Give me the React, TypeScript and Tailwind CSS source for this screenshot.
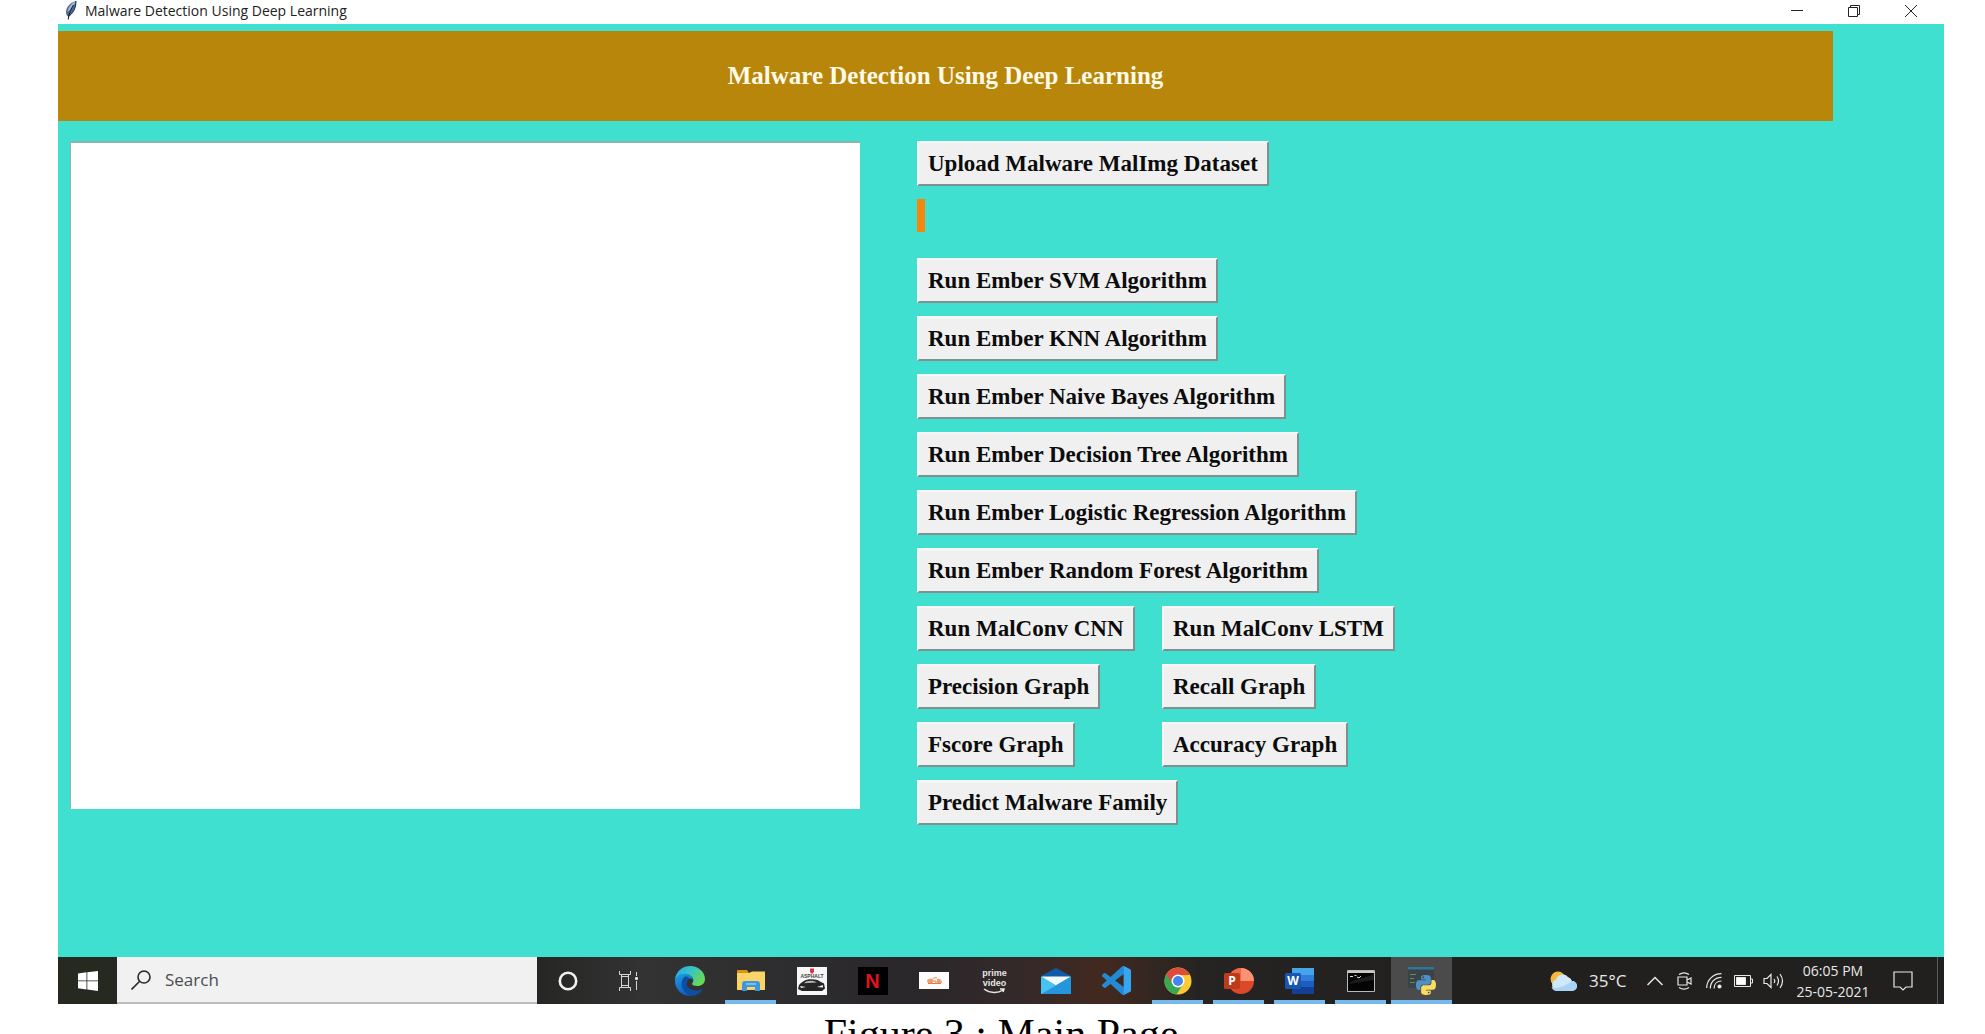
import type { ReactNode } from 'react';

const algorithms = [
  'Run Ember SVM Algorithm',
  'Run Ember KNN Algorithm',
  'Run Ember Naive Bayes Algorithm',
  'Run Ember Decision Tree Algorithm',
  'Run Ember Logistic Regression Algorithm',
  'Run Ember Random Forest Algorithm',
];

const pairs = [
  ['Run MalConv CNN', 'Run MalConv LSTM'],
  ['Precision Graph', 'Recall Graph'],
  ['Fscore Graph', 'Accuracy Graph'],
];

function TkButton({ children }: { children: ReactNode }) {
  return (
    <button className="h-[45px] border-2 border-t-[#f8f8f8] border-r-[#7f9090] border-b-[#7f9090] border-l-[#f8f8f8] bg-[#f0f0f0] px-[9px] text-[23px] leading-none font-bold whitespace-nowrap text-[#0c0c0c]">
      {children}
    </button>
  );
}

function FeatherIcon() {
  return (
    <svg viewBox="0 0 12 19" className="h-[19px] w-3">
      <path d="M11 0C6 1 1 6 1 11c0 2 .8 3.500 2 4.500C8 13 11 7 11 0z" fill="#4d6a94" />
      <path d="M11 0C7 1.500 3 6 2.500 11 6 9 9 5 11 0z" fill="#9db4d3" />
      <path d="M11 0C11 7 8 13 3 15.500" fill="none" stroke="#1b2740" />
      <path d="M8.500 4C6 8 4 12 3.200 18.500" fill="none" stroke="#16181d" />
    </svg>
  );
}

function TitleBar() {
  return (
    <header className="flex h-6 items-center bg-white pb-[3px] pl-[7px] text-[#222]">
      <FeatherIcon />
      <h1 className="ml-2 font-['Open_Sans',sans-serif] text-sm leading-5">
        Malware Detection Using Deep Learning
      </h1>
      <div className="ml-auto flex pr-1">
        <button aria-label="Minimize" className="flex h-5 w-[57px] items-center justify-center">
          <svg viewBox="0 0 12 12" className="h-3 w-3" stroke="#222">
            <path d="M0 5.500h12" />
          </svg>
        </button>
        <button aria-label="Restore" className="flex h-5 w-[57px] items-center justify-center">
          <svg viewBox="0 0 12 12" className="h-3 w-3" fill="none" stroke="#222">
            <path d="M.5 2.500h9v9h-9zM2.500 2V.5h9v9H10" />
          </svg>
        </button>
        <button aria-label="Close" className="flex h-5 w-[58px] items-center justify-center">
          <svg viewBox="0 0 12 12" className="h-3 w-3" stroke="#222">
            <path d="M0 0l12 12M12 0L0 12" />
          </svg>
        </button>
      </div>
    </header>
  );
}

function EdgeIcon() {
  return (
    <svg viewBox="0 0 30 30" className="h-[30px] w-[30px]">
      <defs>
        <linearGradient id="edge-top" x1="0" y1="0" x2="1" y2="0.500">
          <stop offset="0" stopColor="#2aa5e6" />
          <stop offset="0.500" stopColor="#34c3c8" />
          <stop offset="1" stopColor="#66d957" />
        </linearGradient>
        <linearGradient id="edge-low" x1="0" y1="0" x2="0.500" y2="1">
          <stop offset="0" stopColor="#1f9bea" />
          <stop offset="1" stopColor="#0f5bb5" />
        </linearGradient>
      </defs>
      <path d="M0 14C.5 6 7 0 15 0c8.500 0 15 6 15 13 0 4.500-3.500 7-7.500 7-3 0-5.500-1-5.500-2.300 0-.7 1.300-1.300 1.300-3.500 0-3-3-5.200-7-5.200C6 9 1.500 11 0 14z" fill="url(#edge-top)" />
      <path d="M0 14c1.500-4.500 6-6.500 10.500-6.300 4.300.2 7.300 3 7.800 5.800-3-2.500-7-.5-7 4 0 5.500 6 9.500 12 7.500C20.500 28.500 17 30 14 29.800 6 29.500 0 23 0 15z" fill="url(#edge-low)" />
      <path d="M10 10.500c-4 3-4.500 9-1.500 13.500 2 3 4.800 5 7.500 5.700 5 .3 9.500-2.500 12-6.700-8 3.700-16.500 0-16.500-6 0-2.500 1.500-4 3-4.700-1.200-1.500-3-2-4.500-1.800z" fill="#0c4ea3" />
    </svg>
  );
}

function FolderIcon() {
  return (
    <svg viewBox="0 0 28 23" className="h-[23px] w-7">
      <path d="M0 1h10l2 3H0z" fill="#d99413" />
      <path d="M0 4h12l3-1.500h13V21H0z" fill="#fbd468" />
      <path d="M5 22v-7a3 3 0 0 1 3-3h12a3 3 0 0 1 3 3v7h-5v-4h-8v4z" fill="#3d97dd" />
      <path d="M9 14h10v2H9z" fill="#77bdf0" />
    </svg>
  );
}

function RacingIcon() {
  return (
    <svg viewBox="0 0 30 28" className="h-7 w-[30px]">
      <path d="M0 0h30v28H0z" fill="#f6f6f6" />
      <path d="M13 1.500h4V5l-2 2-2-2z" fill="#d0394a" />
      <text x="15" y="11" fontSize="5" fontWeight="700" textAnchor="middle" fill="#444" fontFamily="Liberation Sans, sans-serif">
        ASPHALT
      </text>
      <path d="M2 18c2-2 5-5 9-5.500 5-.5 10 0 12 2l4 2 1 5-3 2.500H5l-4-2z" fill="#252525" />
      <path d="M9 14.500c4-1.200 8-1 11 1l-13 .7z" fill="#b5b5b5" />
      <path d="M3 19l6 1-5 1zM26 18l-6 2 6 .5z" fill="#eee" />
    </svg>
  );
}

function SonyIcon() {
  return (
    <svg viewBox="0 0 30 17" className="h-[17px] w-[30px]">
      <path d="M0 0h30v17H0z" fill="#fcfcfc" />
      <path d="M8 9c0-2 3-3 5-2v4c-2 1-5 0-5-2zM18 7c3-1 5 1 5 4h-5z" fill="#f0a174" />
      <path d="M13 11c-1-4 2-6 5-5M13 9h4v2.500h-4M9 11.500h13" fill="none" stroke="#ea7a45" />
    </svg>
  );
}

function PrimeIcon() {
  return (
    <span className="flex flex-col items-center font-['Liberation_Sans',sans-serif] text-[9px] leading-[10px] font-bold text-[#e6e6e6]">
      <span>prime</span>
      <span>video</span>
      <svg viewBox="0 0 24 6" className="h-[6px] w-6" fill="none" stroke="#e6e6e6" strokeWidth="1.500">
        <path d="M2 1c6 4.500 14 4.500 19 1M18 1h4l-1 3" />
      </svg>
    </span>
  );
}

function MailIcon() {
  return (
    <svg viewBox="0 0 30 26" className="h-[26px] w-[30px]">
      <path d="M0 8l15-8 15 8v5H0z" fill="#0f5ba8" />
      <path d="M1 8.500h28v10H1z" fill="#f4fafe" />
      <path d="M0 8.500l15 9 15-9V26H0z" fill="#36b3ea" />
      <path d="M30 8.500V26H0z" fill="#2497dc" />
      <path d="M0 8.500l15 9L0 26z" fill="#48c2f0" />
    </svg>
  );
}

function CodeIcon() {
  return (
    <svg viewBox="0 0 24 24" className="h-[29px] w-[29px]" fill="#2489d3">
      <path d="M23.150 2.587L18.210.21a1.494 1.494 0 0 0-1.705.29l-9.460 8.630-4.120-3.128a.999.999 0 0 0-1.276.057L.327 7.261A1 1 0 0 0 .326 8.740L3.899 12 .326 15.260a1 1 0 0 0 .001 1.479L1.650 17.940a.999.999 0 0 0 1.276.057l4.120-3.128 9.460 8.630a1.492 1.492 0 0 0 1.704.29l4.942-2.377A1.500 1.500 0 0 0 24 20.060V3.939a1.500 1.500 0 0 0-.85-1.352zm-5.146 14.861L10.826 12l7.178-5.448v10.896z" />
      <path d="M18 .1l5.150 2.487A1.500 1.500 0 0 1 24 3.939V20.060a1.500 1.500 0 0 1-.85 1.352L18 23.900z" fill="#36a6f0" />
    </svg>
  );
}

function ChromeIcon() {
  return (
    <svg viewBox="0 0 28 28" className="h-7 w-7">
      <circle cx="14" cy="14" r="13.500" fill="#fbc932" />
      <path d="M14 14L2.300 7.200A13.500 13.500 0 0 0 12.500 27.400L19 17z" fill="#38a852" />
      <path d="M14 8h11.900A13.500 13.500 0 0 0 2.300 7.200L8.700 17z" fill="#de4b3c" />
      <circle cx="14" cy="14" r="6.500" fill="#fff" />
      <circle cx="14" cy="14" r="5" fill="#4286ee" />
    </svg>
  );
}

function PowerPointIcon() {
  return (
    <svg viewBox="0 0 30 26" className="h-[26px] w-[30px]">
      <circle cx="17" cy="13" r="13" fill="#d9492a" />
      <path d="M17 0a13 13 0 0 1 13 13H17z" fill="#fb9274" />
      <path d="M17 0a13 13 0 0 0-13 13h13z" fill="#ea6a4a" />
      <rect y="5" width="16" height="16" rx="1.500" fill="#bd3a1b" />
      <text x="8" y="17" fontSize="12" fontWeight="700" textAnchor="middle" fill="#fff" fontFamily="Open Sans, sans-serif">
        P
      </text>
    </svg>
  );
}

function WordIcon() {
  return (
    <svg viewBox="0 0 30 26" className="h-[26px] w-[30px]">
      <path d="M7 0h22v7H7z" fill="#46a5ea" />
      <path d="M7 7h22v6H7z" fill="#2f7ddb" />
      <path d="M7 13h22v6H7z" fill="#1d5dc0" />
      <path d="M7 19h22v7H7z" fill="#153f95" />
      <rect y="5" width="16" height="16" rx="1.500" fill="#1956b3" />
      <text x="8" y="17" fontSize="12" fontWeight="700" textAnchor="middle" fill="#fff" fontFamily="Open Sans, sans-serif">
        W
      </text>
    </svg>
  );
}

function TerminalIcon() {
  return (
    <svg viewBox="0 0 28 22" className="h-[22px] w-7">
      <path d="M.5.5h27v21H.5z" fill="#050505" stroke="#b9b9b9" />
      <path d="M1 1h26v2H1z" fill="#c9c9c9" />
      <path d="M3 6.500h3M7.500 5.500h2M10 7l2 1 2-2" fill="none" stroke="#ddd" />
      <path d="M1 14C8 8 18 9 27 4v6z" fill="#1d1d1d" />
    </svg>
  );
}

const snake =
  'M14.250.18l.9.2.73.26.59.3.45.32.34.34.25.34.16.33.1.3.04.26.02.2-.01.13V8.500l-.05.63-.13.55-.21.46-.26.38-.3.31-.33.25-.35.19-.35.14-.33.1-.3.07-.26.04-.21.02H8.770l-.69.05-.59.14-.5.22-.41.27-.33.32-.27.35-.2.36-.15.37-.1.35-.07.32-.04.27-.02.21v3.060H3.170l-.21-.03-.28-.07-.32-.12-.35-.18-.36-.26-.36-.36-.35-.46-.32-.59-.28-.73-.21-.88-.14-1.050-.05-1.230.06-1.220.16-1.040.24-.87.32-.71.36-.57.4-.44.42-.33.42-.24.4-.16.36-.1.32-.05.24-.01h.16l.06.01h8.160v-.83H6.180l-.01-2.750-.02-.37.05-.34.11-.31.17-.28.25-.26.31-.23.38-.2.44-.18.51-.15.58-.12.64-.1.71-.06.77-.04.84-.02 1.270.05zm-6.300 1.980l-.23.33-.08.41.08.41.23.34.33.22.41.09.41-.09.33-.22.23-.34.08-.41-.08-.41-.23-.33-.33-.22-.41-.09-.41.09z';

function PythonIcon() {
  return (
    <svg viewBox="0 0 28 28" className="h-7 w-7">
      <path d="M0 0h26v21H0z" fill="#3c4248" />
      <path d="M0 0h26v2.500H0z" fill="#2f7894" />
      <path d="M2 7.500h6M2 11.500h4M2 15.500h5" stroke="#4c9a5c" />
      <g transform="translate(8 8) scale(0.830)">
        <path d={snake} fill="#4d90c6" />
        <path d={snake} fill="#fbdc62" transform="rotate(180 12 12)" />
      </g>
    </svg>
  );
}

const apps: { name: string; icon: ReactNode; open?: boolean; active?: boolean }[] = [
  {
    name: 'Cortana',
    icon: (
      <svg viewBox="0 0 20 20" className="h-5 w-5">
        <circle cx="10" cy="10" r="8.200" fill="none" stroke="#f2f2f2" strokeWidth="2.600" />
      </svg>
    ),
  },
  {
    name: 'Task View',
    icon: (
      <svg viewBox="0 0 22 20" className="h-5 w-[22px]" fill="none" stroke="#d6d6d6">
        <path d="M1.500 0v3.500h11V0M1.500 20v-3.500h11V20M3.500 5.500h7v9h-7zM3.500 3v14M10.500 3v14M18.500 1v4M18.500 10v9" />
        <path d="M17.500 6.500h2v2h-2z" fill="#fff" />
      </svg>
    ),
  },
  { name: 'Edge', icon: <EdgeIcon /> },
  { name: 'File Explorer', icon: <FolderIcon />, open: true },
  { name: 'Asphalt', icon: <RacingIcon /> },
  {
    name: 'Netflix',
    icon: (
      <span className="flex h-7 w-[30px] items-center justify-center bg-black font-['Liberation_Sans_Narrow','Liberation_Sans',sans-serif] text-xl leading-none font-bold text-[#e01220]">
        N
      </span>
    ),
  },
  { name: 'Sony LIV', icon: <SonyIcon /> },
  { name: 'Prime Video', icon: <PrimeIcon /> },
  { name: 'Mail', icon: <MailIcon /> },
  { name: 'Visual Studio Code', icon: <CodeIcon /> },
  { name: 'Chrome', icon: <ChromeIcon />, open: true },
  { name: 'PowerPoint', icon: <PowerPointIcon />, open: true },
  { name: 'Word', icon: <WordIcon />, open: true },
  { name: 'Command Prompt', icon: <TerminalIcon />, open: true },
  { name: 'Python', icon: <PythonIcon />, open: true, active: true },
];

function Tray() {
  return (
    <div className="ml-auto flex items-center text-[#e8e8e8]">
      <svg viewBox="0 0 27 20" className="h-5 w-[27px]">
        <circle cx="8" cy="8" r="7.500" fill="#f6b83c" />
        <path d="M7 20a6 6 0 0 1-1-11.500A7 7 0 0 1 18 6a6 6 0 0 1 4 4 5 5 0 0 1 0 10z" fill="#cfe8fa" />
        <path d="M7 20a6 6 0 0 1-5.500-4c6 3 15-2 20.500-6a5 5 0 0 1 0 10z" fill="#a8d3f4" />
      </svg>
      <span className="ml-3 w-[46px] text-[17px]">35°C</span>
      <button aria-label="Show hidden icons" className="ml-3">
        <svg viewBox="0 0 16 10" className="h-[10px] w-4" fill="none" stroke="#e8e8e8" strokeWidth="1.500">
          <path d="M.5 9L8 1.500 15.500 9" />
        </svg>
      </button>
      <svg viewBox="0 0 16 18" className="ml-[14px] h-[18px] w-4" fill="none" stroke="#e8e8e8" strokeWidth="1.200">
        <path d="M1 5h9v8H1zM10 8l4-2v6l-4-2M2 2.500c3-2 7-2 10 0M2 15.500c3 2 7 2 10 0" />
      </svg>
      <svg viewBox="0 0 16 16" className="ml-[13px] h-4 w-4" fill="none" stroke="#e8e8e8" strokeWidth="1.200">
        <path d="M.7 15C.7 7 7 .7 15.500.7M4.300 15.500C4.300 9 9 4.300 15.500 4.300M8 15.500C8 11 11 8 15.500 8" />
        <circle cx="13.500" cy="13.500" r="1.500" fill="#fff" />
      </svg>
      <svg viewBox="0 0 19 12" className="ml-3 h-3 w-[19px]" fill="none" stroke="#e8e8e8">
        <path d="M.5.5h16v11H.5zM17 4h1.500v4H17" />
        <path d="M2.500 2.500h9v7h-9z" fill="#fff" />
      </svg>
      <svg viewBox="0 0 21 16" className="ml-[10px] h-4 w-[21px]" fill="none" stroke="#e8e8e8" strokeWidth="1.200">
        <path d="M1 5.500h3l4-4v13l-4-4H1zM11 6q1.500 2 0 4M14 3.500q3 4.500 0 9M17 1q5 7 0 14" />
      </svg>
      <div className="ml-2 flex w-[82px] flex-col items-center text-sm leading-[21px]">
        <span>06:05 PM</span>
        <span>25-05-2021</span>
      </div>
      <button aria-label="Notifications" className="mr-6 ml-[19px]">
        <svg viewBox="0 0 20 20" className="h-5 w-5" fill="none" stroke="#e8e8e8" strokeWidth="1.200">
          <path d="M1 1h18v15h-6l-3 3-3-3H1z" />
        </svg>
      </button>
      <span className="mr-[6px] h-[47px] w-px bg-[#5c5c5c]"></span>
    </div>
  );
}

function Taskbar() {
  return (
    <footer className="flex h-[47px] shrink-0 bg-[#21201f] font-['Open_Sans',sans-serif]">
      <button aria-label="Start" className="flex w-[59px] items-center justify-center bg-[#25291f]">
        <svg viewBox="0 0 20 20" className="h-5 w-5" fill="#fff">
          <path d="M0 2.500L8.500 1.300V9.500H0zM9.300 1.200L20 0v9.500H9.300zM0 10.300h8.500v8.200L0 17.300zM9.300 10.300H20V20L9.300 18.600z" />
        </svg>
      </button>
      <label className="flex w-[421px] items-center border-b-2 border-[#bdbdbd] bg-[#f1f1f1] pl-[14px]">
        <svg viewBox="0 0 20 20" className="h-5 w-5" fill="none" stroke="#2a2a2a" strokeWidth="1.600">
          <circle cx="13" cy="7" r="6" />
          <path d="M8.700 11.300L.5 19.500" />
        </svg>
        <input
          type="text"
          aria-label="Search"
          placeholder="Search"
          className="ml-[14px] w-[340px] bg-transparent text-[17px] outline-none placeholder:text-[#4a4d50]"
        />
      </label>
      <nav className="-ml-px flex bg-[linear-gradient(90deg,#262625,#333333_12%,#29272a_40%,#33292a_52%,#42291f_62%,#262423_72%,#21201f)]">
        {apps.map(({ name, icon, open, active }) => (
          <button
            key={name}
            aria-label={name}
            className={`flex w-[61px] flex-col items-center ${active ? 'bg-[#4b4b4b]' : ''}`}
          >
            <span className="flex h-[43px] items-center pt-1">{icon}</span>
            {open && <span className={`h-1 bg-[#76b9ed] ${active ? 'w-full' : 'w-[51px]'}`}></span>}
          </button>
        ))}
      </nav>
      <Tray />
    </footer>
  );
}

export default function App() {
  return (
    <div className="flex h-screen flex-col overflow-hidden bg-white pr-[41px] pl-[58px]">
      <TitleBar />
      <main className="flex-1 bg-[#40e0d0] pt-[7px] font-['Liberation_Serif',serif]">
        <h2 className="mr-[111px] flex h-[90px] items-center justify-center bg-[#b8860b] text-[25px] font-bold text-[#fffbe8]">
          Malware Detection Using Deep Learning
        </h2>
        <div className="flex gap-[57px] pt-5 pl-3">
          <textarea
            aria-label="Output"
            className="h-[668px] w-[790px] resize-none border-t-2 border-l border-[#8ab5b0] bg-white p-1 outline-none"
          />
          <div className="flex flex-col items-start gap-[13px]">
            <TkButton>Upload Malware MalImg Dataset</TkButton>
            {/* path label, empty until a dataset is picked */}
            <div className="h-[46px]">
              <div className="h-[33px] w-2 bg-[#f5860c]"></div>
            </div>
            {algorithms.map((label) => (
              <TkButton key={label}>{label}</TkButton>
            ))}
            <div className="grid grid-cols-[245px_auto] justify-items-start gap-y-[13px]">
              {pairs.flat().map((label) => (
                <TkButton key={label}>{label}</TkButton>
              ))}
            </div>
            <TkButton>Predict Malware Family</TkButton>
          </div>
        </div>
      </main>
      <Taskbar />
      <p className="h-[30px] shrink-0 pt-2 text-center font-['Liberation_Serif',serif] text-[42px] leading-[44px] text-black">
        Figure 3 : Main Page
      </p>
    </div>
  );
}
